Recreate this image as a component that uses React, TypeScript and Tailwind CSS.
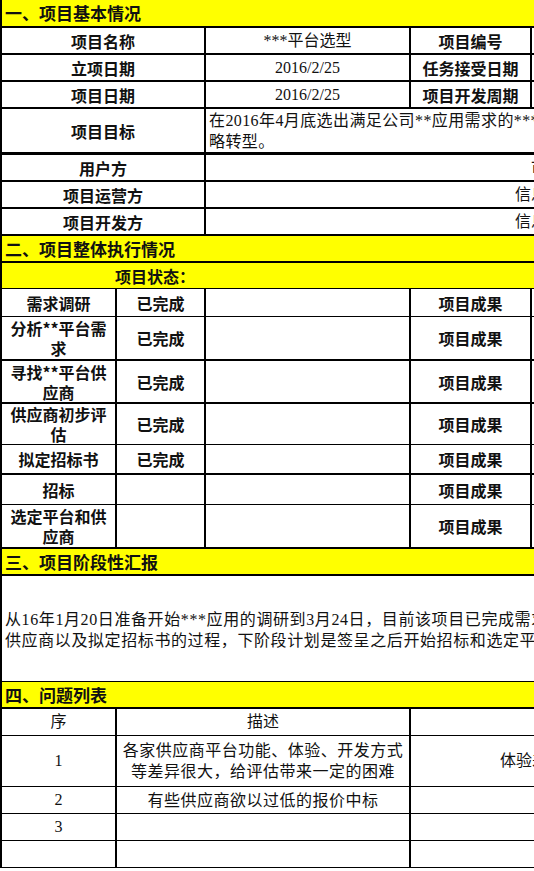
import React from 'react';

const sans = 'font-["Noto_Sans_CJK_SC",sans-serif]';
const serif = 'font-["Liberation_Serif","Noto_Sans_CJK_SC",serif]';

const basicRows = [
  { label: '项目名称', value: '***平台选型', label2: '项目编号' },
  { label: '立项日期', value: '2016/2/25', label2: '任务接受日期' },
  { label: '项目日期', value: '2016/2/25', label2: '项目开发周期' },
];

const partyRows = [
  { label: '用户方', value: '市场部' },
  { label: '项目运营方', value: '信息技术部' },
  { label: '项目开发方', value: '信息技术部' },
];

const steps = [
  { name: '需求调研', status: '已完成', h: 'h-[28px]', line: 'border-b' },
  { name: '分析**平台需求', status: '已完成', h: 'h-[44px]', line: 'border-b-2' },
  { name: '寻找**平台供应商', status: '已完成', h: 'h-[43px]', line: 'border-b-2' },
  { name: '供应商初步评估', status: '已完成', h: 'h-[41px]', line: 'border-b' },
  { name: '拟定招标书', status: '已完成', h: 'h-[30px]', line: 'border-b-2' },
  { name: '招标', status: '', h: 'h-[30px]', line: 'border-b' },
  { name: '选定平台和供应商', status: '', h: 'h-[44px]', line: 'border-b-2' },
];

const issues = [
  { no: '1', text: ['各家供应商平台功能、体验、开发方式', '等差异很大，给评估带来一定的困难'], extra: '体验差异', h: 'h-[51px]' },
  { no: '2', text: ['有些供应商欲以过低的报价中标'], extra: '', h: 'h-[27px]' },
  { no: '3', text: [], extra: '', h: 'h-[27px]' },
  { no: '', text: [], extra: '', h: 'h-[27px]' },
];

const SectionBar = ({ title, h = 'h-[27px]' }: { title: string; h?: string }) => (
  <div className={`flex items-center ${h} bg-[#ffff00] border-b-2 border-black pl-[3px] text-[17px] font-bold text-[#111] ${sans}`}>
    {title}
  </div>
);

export default function App() {
  return (
    <div className="w-[534px] h-[871px] overflow-hidden bg-white">
      <div className="w-[1000px] border-l-2 border-black text-[#111]">
        {/* 一 */}
        <SectionBar title="一、项目基本情况" h="h-[28px]" />
        {basicRows.map(r => (
          <div key={r.label} className="flex h-[27px] border-b-2 border-black">
            <div className={`w-[204px] border-r-2 border-black flex items-center justify-center text-[16px] font-bold ${sans}`}>{r.label}</div>
            <div className={`w-[205px] border-r-2 border-black flex items-center justify-center text-[16px] ${serif}`}>{r.value}</div>
            <div className={`w-[121px] border-r-2 border-black flex items-center justify-center text-[16px] font-bold ${sans}`}>{r.label2}</div>
            <div className="flex-1" />
          </div>
        ))}
        <div className="flex h-[46px] border-b-[3px] border-black">
          <div className={`w-[204px] border-r-2 border-black flex items-center justify-center text-[16px] font-bold ${sans}`}>项目目标</div>
          <div className={`flex-1 pl-[3px] pt-[1px] text-[16px] leading-[21px] tracking-[0.4px] ${serif}`}>
            <p className="whitespace-nowrap">在2016年4月底选出满足公司**应用需求的***平台，支撑公司战</p>
            <p>略转型。</p>
          </div>
        </div>
        {partyRows.map(r => (
          <div key={r.label} className="flex h-[27px] border-b-2 border-black">
            <div className={`w-[204px] border-r-2 border-black flex items-center justify-center text-[16px] font-bold ${sans}`}>{r.label}</div>
            <div className={`w-[698px] flex items-center justify-center text-[16px] ${serif}`}>{r.value}</div>
          </div>
        ))}

        {/* 二 */}
        <SectionBar title="二、项目整体执行情况" />
        <div className={`flex items-center h-[26px] bg-[#ffff00] border-b border-black pl-[113px] text-[16px] font-bold ${sans}`}>
          项目状态：
        </div>
        {steps.map(s => (
          <div key={s.name} className={`flex ${s.h} ${s.line} border-black`}>
            <div className={`w-[115px] border-r-2 border-black flex items-center justify-center text-center px-[3px] text-[16px] leading-[20px] font-bold ${sans}`}>{s.name}</div>
            <div className={`w-[89px] border-r-2 border-black flex items-center justify-center text-[16px] font-bold ${sans}`}>{s.status}</div>
            <div className="w-[205px] border-r-2 border-black" />
            <div className={`w-[121px] border-r-2 border-black flex items-center justify-center text-[16px] font-bold ${sans}`}>项目成果</div>
            <div className="flex-1" />
          </div>
        ))}

        {/* 三 */}
        <SectionBar title="三、项目阶段性汇报" />
        <div className={`flex flex-col justify-center h-[106px] border-b border-black pl-[3px] pt-[3px] text-[16px] leading-[21px] tracking-[0.6px] ${serif}`}>
          <p className="whitespace-nowrap">从16年1月20日准备开始***应用的调研到3月24日，目前该项目已完成需求调研、分析、寻找</p>
          <p className="whitespace-nowrap">供应商以及拟定招标书的过程，下阶段计划是签呈之后开始招标和选定平台及供应商。</p>
        </div>

        {/* 四 */}
        <SectionBar title="四、问题列表" />
        <div className={`flex h-[27px] border-b border-black text-[16px] ${serif}`}>
          <div className="w-[115px] border-r-2 border-black flex items-center justify-center">序</div>
          <div className="w-[294px] border-r-2 border-black flex items-center justify-center">描述</div>
          <div className="flex-1" />
        </div>
        {issues.map((it, i) => (
          <div key={i} className={`flex ${it.h} border-b border-black text-[16px] ${serif}`}>
            <div className="w-[115px] border-r-2 border-black flex items-center justify-center">{it.no}</div>
            <div className="w-[294px] border-r-2 border-black flex flex-col items-center justify-center leading-[21px] tracking-[0.5px]">
              {it.text.map(t => <p key={t} className="whitespace-nowrap">{t}</p>)}
            </div>
            <div className="w-[242px] flex items-center justify-center">{it.extra}</div>
          </div>
        ))}
      </div>
    </div>
  );
}
